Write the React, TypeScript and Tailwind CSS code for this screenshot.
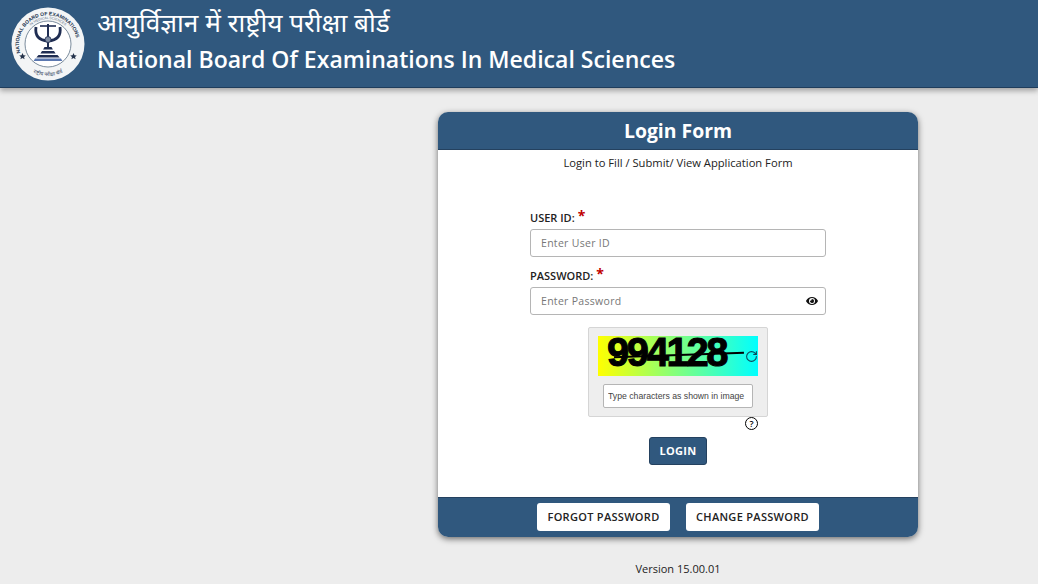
import { RotateCw } from "lucide-react";
import { FaEye } from "react-icons/fa";

const sans = "font-['Open_Sans','Noto_Sans',sans-serif]";

function Star({ x }: { x: number }) {
  return <path transform={`translate(${x} 46)`} d="M0 0 l1 2.2 2.3.2-1.8 1.5.6 2.3-2.1-1.2-2.1 1.2.6-2.3-1.8-1.5 2.3-.2z" fill="#25344c" />;
}

function Logo() {
  return (
    <svg width="74" height="74" viewBox="0 0 74 74" className="shrink-0">
      <defs>
        <path id="ringTop" d="M9.3 46 A29 29 0 1 1 64.7 46" fill="none" />
        <path id="ringInner" d="M12 37 A25 25 0 0 1 62 37" fill="none" />
        <path id="ringBottom" d="M10.8 55.4 A32 32 0 0 0 63.2 55.4" fill="none" />
      </defs>
      <circle cx="37" cy="37" r="36.5" fill="#f3f5f6" />
      <circle cx="37" cy="37" r="23" fill="#fff" stroke="#5b7084" strokeWidth="0.8" />
      <text fontSize="5" fontWeight="700" fill="#24344f" fontFamily="Liberation Sans">
        <textPath href="#ringTop">NATIONAL BOARD OF EXAMINATIONS</textPath>
      </text>
      <text fontSize="3.4" fill="#5c6d84" fontFamily="Liberation Sans" textAnchor="middle">
        <textPath href="#ringInner" startOffset="50%">IN MEDICAL SCIENCES</textPath>
      </text>
      <text fontSize="5" fill="#34465e" fontFamily="Noto Sans" textAnchor="middle">
        <textPath href="#ringBottom" startOffset="50%">राष्ट्रीय परीक्षा बोर्ड</textPath>
      </text>
      <path d="M25 20 q-2 13 12 14 q14 -1 12 -14" fill="none" stroke="#1f2d52" strokeWidth="2.8" />
      <path d="M29 19 h16" stroke="#1f2d52" strokeWidth="1.6" />
      <path d="M37 17 v24" stroke="#1f2d52" strokeWidth="2" />
      <circle cx="37" cy="32.5" r="3" fill="#7d8aa0" stroke="#1f2d52" strokeWidth="0.8" />
      <path d="M33.5 40 h7 l1.4 2.6 h-9.8z M31 44 h12 l1.6 2.6 h-15.2z M27.5 48 h19 l2.2 2.4 h-23.4z" fill="#1f2d52" />
      <path d="M24 51.5 h26 l1.4 2.6 h-28.8z" fill="#5b78b0" />
      <Star x={11.5} />
      <Star x={62.5} />
    </svg>
  );
}

function Field({ label, placeholder, children }: { label: string; placeholder: string; children?: React.ReactNode }) {
  return (
    <div className="w-full">
      <label className="flex h-[22px] items-center text-[11px] font-semibold text-[#222]">
        {label} <span className="ml-[3px] -translate-y-[2px] text-[14px] font-bold leading-none text-[#c00000]">*</span>
      </label>
      <div className="relative">
        <input
          placeholder={placeholder}
          className="h-[28px] w-full rounded-[3px] border border-[#b5b5b5] bg-white px-[10px] text-[10.5px] tracking-[0.3px] outline-none placeholder:text-[#777]"
        />
        {children}
      </div>
    </div>
  );
}

export default function App() {
  return (
    <div className={`${sans} flex h-[584px] w-[1038px] flex-col overflow-hidden bg-[#ededed]`}>
      <header className="flex h-[88px] shrink-0 items-center gap-[12px] border-b border-[#1f3d5c] bg-[#30587e] pl-[11px] shadow-[0_3px_5px_rgba(0,0,0,0.3)]">
        <Logo />
        <div className="-mt-[9px] text-white">
          <div className="font-['Noto_Sans',sans-serif] text-[26.2px] leading-[38px]">आयुर्विज्ञान में राष्ट्रीय परीक्षा बोर्ड</div>
          <div className="mt-[2px] text-[23.05px] font-semibold leading-[32px]">National Board Of Examinations In Medical Sciences</div>
        </div>
      </header>

      <main className="ml-[438px] mt-[24px] w-[480px]">
        <div className="overflow-hidden rounded-[10px] shadow-[0_2px_6px_rgba(0,0,0,0.55)]">
          <div className="flex h-[38px] items-center justify-center border-b border-[#24415f] bg-[#30587e] text-[19.4px] font-bold text-white">
            Login Form
          </div>
          <div className="flex h-[347px] flex-col items-center bg-white">
            <p className="mt-[5px] text-[11.2px] leading-[16px] text-[#222]">Login to Fill / Submit/ View Application Form</p>
            <div className="mt-[36px] flex w-[296px] flex-col gap-[8px]">
              <Field label="USER ID:" placeholder="Enter User ID" />
              <Field label="PASSWORD:" placeholder="Enter Password">
                <FaEye size={12} className="absolute right-[8px] top-[8px] text-[#111]" />
              </Field>
            </div>
            <div className="relative mt-[12px] flex h-[90px] w-[180px] flex-col items-center rounded-[2px] border border-[#d5d5d5] bg-[#eeeeee] pt-[8px]">
              <div className="relative flex h-[40px] w-[160px] items-center bg-linear-to-r/srgb from-[#ffff00] to-[#00ffff] pl-[9px]">
                <span className="-mt-[8px] font-['Liberation_Sans',sans-serif] text-[40px] font-bold leading-none tracking-[-2.4px] text-black [-webkit-text-stroke:1px_black]">994128</span>
                <span className="absolute left-[16px] top-[18px] h-[2px] w-[130px] -rotate-2 bg-black" />
                <RotateCw size={13} strokeWidth={2} className="absolute right-[0px] top-[14px] text-[#0b4a5a]" />
              </div>
              <input
                placeholder="Type characters as shown in image"
                className="mt-[8px] h-[24px] w-[150px] rounded-[2px] border border-[#b5b5b5] bg-white px-[4px] font-['Liberation_Sans',sans-serif] text-[8.7px] outline-none placeholder:text-[#444]"
              />
              <span className="absolute -bottom-[14px] right-[9px] flex h-[13px] w-[13px] items-center justify-center rounded-full border border-black bg-white text-[9px] font-semibold leading-none text-black">?</span>
            </div>
            <button className="mt-[20px] h-[28px] w-[58px] rounded-[3px] border border-[#24415f] bg-[#30587e] text-[11px] font-bold tracking-[0.3px] text-white">
              LOGIN
            </button>
          </div>
          <div className="flex h-[40px] items-start justify-center gap-[16px] border-t border-[#24415f] bg-[#30587e] pt-[5px]">
            <button className="h-[28px] w-[133px] rounded-[3px] bg-white text-[11px] font-semibold tracking-[0.3px] text-[#222]">FORGOT PASSWORD</button>
            <button className="h-[28px] w-[133px] rounded-[3px] bg-white text-[11px] font-semibold tracking-[0.3px] text-[#222]">CHANGE PASSWORD</button>
          </div>
        </div>
        <p className="mt-[24px] text-center text-[11px] leading-[16px] text-[#222]">Version 15.00.01</p>
      </main>
    </div>
  );
}
